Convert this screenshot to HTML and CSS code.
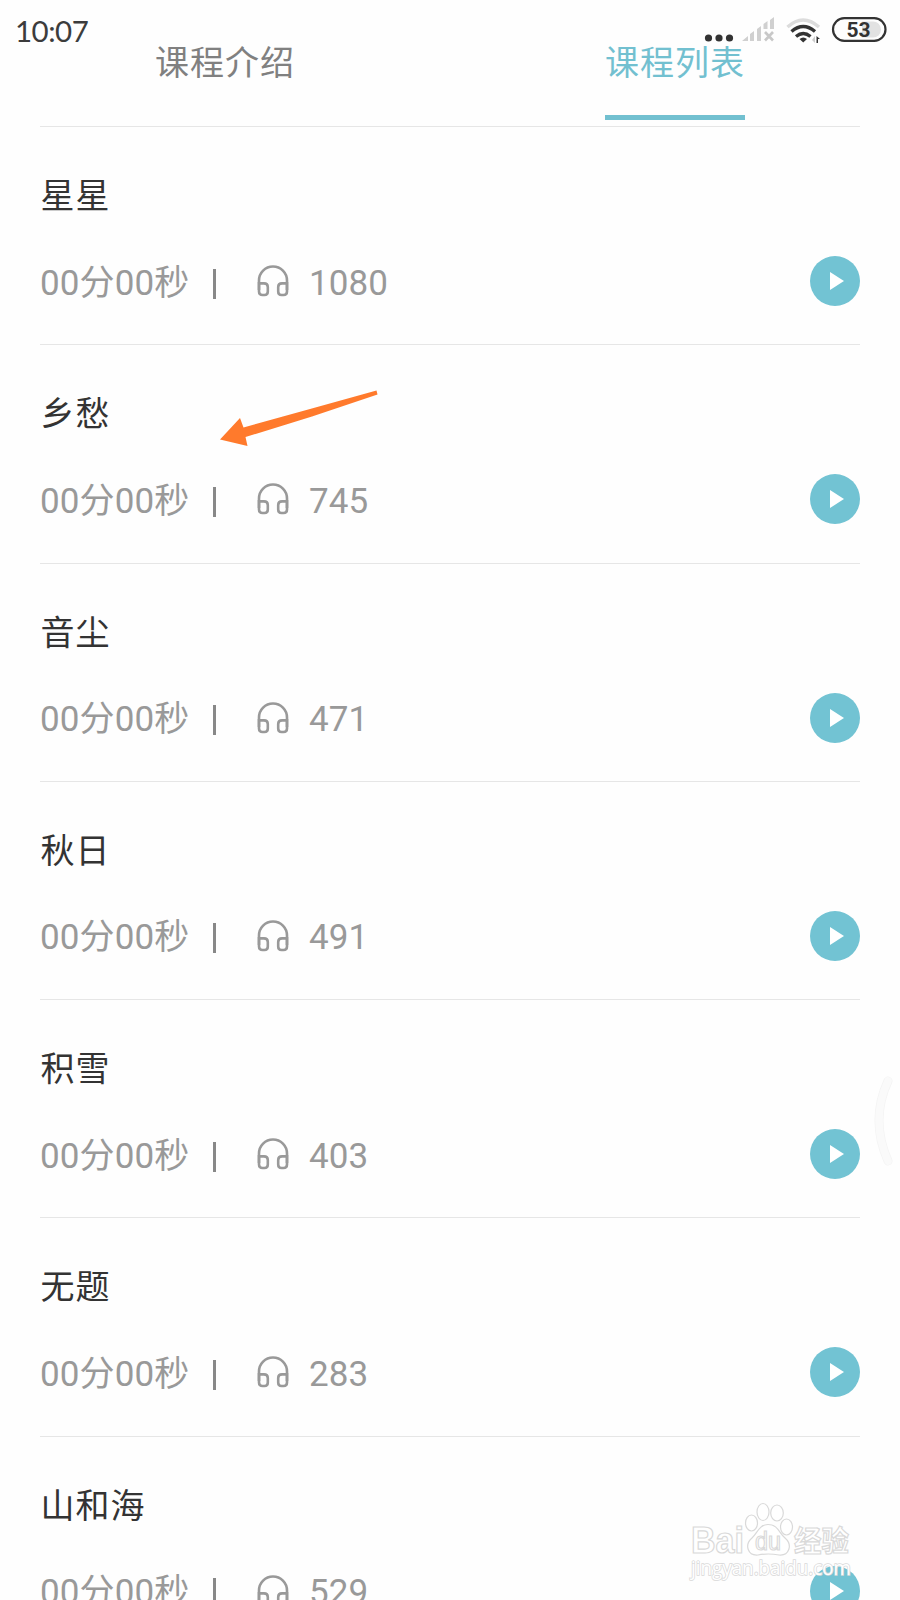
FILE: index.html
```
<!DOCTYPE html>
<html lang="zh-CN">
<head>
<meta charset="UTF-8">
<meta name="viewport" content="width=device-width, initial-scale=1.0">
<title>课程列表</title>
<link rel="stylesheet" href="styles.css">
</head>
<body>
<svg class="symbols" width="0" height="0">
    <symbol id="headphone" viewBox="0 0 32 32">
        <path d="M2 25V15.500a14 14 0 0 1 28 0V25" />
        <path d="M2 18.400H7Q10.800 18.400 10.800 22V26.500Q10.800 30 7.500 30H5.500Q2 30 2 26.500Z" />
        <path d="M30 18.400H25Q21.200 18.400 21.200 22V26.500Q21.200 30 24.500 30H26.500Q30 30 30 26.500Z" />
    </symbol>
</svg>

<div class="statusbar">
    <span class="clock">10:07</span>
    <svg class="status-icons" width="192" height="36" viewBox="700 12 192 36">
        <g fill="#333">
            <circle cx="708.5" cy="38" r="3.6" />
            <circle cx="719" cy="38" r="3.6" />
            <circle cx="729.5" cy="38" r="3.6" />
        </g>
        <g fill="#d0d0d0">
            <path d="M742 41l6-5v5zM750 34l4-3v10h-4zM757 29l4-3v15h-4zM763.500 24l4-3v8h-4zM770 20l4-3v12h-4z" />
            <path d="M765 32l8 8.500m0-8.500l-8 8.500" stroke="#c8c8c8" stroke-width="2.600" />
        </g>
        <g fill="none" stroke-width="3.400">
            <path d="M787.500 27Q803 13 819 27" stroke="#dcdcdc" />
            <path d="M791.500 31.500Q803.200 21.500 815 31.500M796 36.500Q803.200 30.500 810.500 36.500" stroke="#333" />
        </g>
        <path d="M799.500 39Q803.200 36 807 39L803.200 42.500z" fill="#333" />
        <path d="M815 36v7l-3-3z" fill="#ccc" />
        <path d="M816.500 36l3.500 3h-2v4h-1.500z" fill="#333" />
        <path d="M862 21.500h11a8 8 0 0 1 0 16h-11z" fill="#e2e2e2" />
        <rect x="833" y="18.200" width="52.500" height="22.600" rx="11.300" fill="none" stroke="#333" stroke-width="2.200" />
        <text class="battery" x="858.500" y="37" text-anchor="middle">53</text>
    </svg>
</div>

<div class="tabs">
    <div class="tab">课程介绍</div>
    <div class="tab active">课程列表</div>
</div>

<div class="list">
    <div class="item">
        <div class="title">星星</div>
        <div class="meta">
            <span class="time">00分00秒</span><span class="sep"></span>
            <svg class="headphone"><use href="#headphone" /></svg>
            <span class="count">1080</span>
            <span class="play"></span>
        </div>
    </div>
    <div class="item">
        <div class="title">乡愁</div>
        <div class="meta">
            <span class="time">00分00秒</span><span class="sep"></span>
            <svg class="headphone"><use href="#headphone" /></svg>
            <span class="count">745</span>
            <span class="play"></span>
        </div>
    </div>
    <div class="item">
        <div class="title">音尘</div>
        <div class="meta">
            <span class="time">00分00秒</span><span class="sep"></span>
            <svg class="headphone"><use href="#headphone" /></svg>
            <span class="count">471</span>
            <span class="play"></span>
        </div>
    </div>
    <div class="item">
        <div class="title">秋日</div>
        <div class="meta">
            <span class="time">00分00秒</span><span class="sep"></span>
            <svg class="headphone"><use href="#headphone" /></svg>
            <span class="count">491</span>
            <span class="play"></span>
        </div>
    </div>
    <div class="item">
        <div class="title">积雪</div>
        <div class="meta">
            <span class="time">00分00秒</span><span class="sep"></span>
            <svg class="headphone"><use href="#headphone" /></svg>
            <span class="count">403</span>
            <span class="play"></span>
        </div>
    </div>
    <div class="item">
        <div class="title">无题</div>
        <div class="meta">
            <span class="time">00分00秒</span><span class="sep"></span>
            <svg class="headphone"><use href="#headphone" /></svg>
            <span class="count">283</span>
            <span class="play"></span>
        </div>
    </div>
    <div class="item">
        <div class="title">山和海</div>
        <div class="meta">
            <span class="time">00分00秒</span><span class="sep"></span>
            <svg class="headphone"><use href="#headphone" /></svg>
            <span class="count">529</span>
            <span class="play"></span>
        </div>
    </div>
</div>

<svg class="arrow" width="160" height="58" viewBox="219 390 160 58">
    <path d="M220 439.500L240 418L243.500 427.500L310 409L376.500 390.500L377.500 394.500L312 416.500L245.500 437L247.500 446Z" fill="#ff7a2c" />
</svg>

<svg class="edge" width="24" height="94" viewBox="872 1074 24 94">
    <path d="M888 1081Q870 1120 888 1161" fill="none" stroke="#f4f4f4" stroke-width="9" stroke-linecap="round" />
    <path d="M888 1081Q870 1120 888 1161" fill="none" stroke="#fafafa" stroke-width="7.500" stroke-linecap="round" />
</svg>

<svg class="watermark" width="180" height="90" viewBox="684 1500 180 90">
    <g fill="#fff" stroke="#d9d9d9" stroke-width="1.200">
        <ellipse cx="751.500" cy="1523" rx="6" ry="8" />
        <ellipse cx="763" cy="1512" rx="6" ry="8.500" />
        <ellipse cx="777" cy="1513" rx="6.300" ry="8" />
        <ellipse cx="786.500" cy="1527" rx="6" ry="8" />
        <path d="M768 1524.500C759 1524.500 757 1534 752 1538C744 1545 748 1556 758 1555Q768 1553 779 1555C789 1556 793 1545 785 1538C779 1533 778 1524.500 768 1524.500Z" />
        <text class="wm-bai" x="691" y="1553" textLength="53" lengthAdjust="spacingAndGlyphs">Bai</text>
        <text class="wm-du" x="755" y="1550" textLength="26" lengthAdjust="spacingAndGlyphs">du</text>
        <text class="wm-cn" x="794" y="1552" textLength="55" lengthAdjust="spacingAndGlyphs">经验</text>
        <text class="wm-url" x="691" y="1575" textLength="160" lengthAdjust="spacingAndGlyphs">jingyan.baidu.com</text>
    </g>
</svg>
</body>
</html>
```
FILE: styles.css
```
* {
  box-sizing: border-box;
}
body {
  position: relative;
  margin: 0;
  width: 900px;
  height: 1600px;
  overflow: hidden;
  background: #fefefe;
  font-family: Roboto, "Noto Sans CJK SC", sans-serif;
}
.symbols {
  position: absolute;
}
.statusbar {
  display: flex;
  justify-content: space-between;
  height: 36px;
  padding: 12px 8px 0 15px;
}
.clock {
  font-family: Lato, sans-serif;
  font-size: 29.500px;
  line-height: 38px;
  letter-spacing: -0.500px;
  color: #3c3c3c;
}
.status-icons {
  position: relative;
  z-index: 1;
  flex: none;
}
.battery {
  font-family: Roboto, sans-serif;
  font-size: 21px;
  font-weight: 700;
  fill: #333;
}
.tabs {
  display: flex;
  justify-content: space-between;
  height: 91px;
  margin: 0 40px;
  padding: 0 115px 6px;
  border-bottom: 1px solid #e6e6e6;
}
.tab {
  width: 140px;
  padding-top: 2px;
  font-size: 34px;
  letter-spacing: 1px;
  line-height: 50px;
  color: #808080;
  white-space: nowrap;
}
.tab.active {
  border-bottom: 5px solid #72c0d0;
  color: #72c0d0;
}
.list {
  margin: 0 40px;
}
.item {
  height: 218.280px;
  padding-top: 44px;
  border-bottom: 1px solid #e6e6e6;
}
.title {
  height: 50px;
  padding-left: 0.500px;
  line-height: 50px;
  font-size: 34px;
  letter-spacing: 1px;
  color: #333;
}
.meta {
  display: flex;
  align-items: center;
  height: 50px;
  margin-top: 35px;
  font-size: 35px;
  line-height: 50px;
  color: #999;
}
.time {
  width: 173px;
  padding-top: 5px;
  letter-spacing: 0.100px;
  white-space: nowrap;
}
.sep {
  width: 3px;
  height: 30px;
  margin-top: 5px;
  background: #888;
}
.headphone {
  width: 32px;
  height: 32px;
  margin-left: 41px;
  fill: none;
  stroke: #999;
  stroke-width: 2.600;
}
.count {
  margin-left: 20px;
  padding-top: 5px;
  letter-spacing: 0.100px;
}
.play {
  display: flex;
  align-items: center;
  width: 50px;
  height: 50px;
  margin-left: auto;
  padding-left: 20px;
  border-radius: 50%;
  background: #72c3d3;
}
.play::before {
  content: "";
  border-left: 14px solid #fff;
  border-top: 9px solid transparent;
  border-bottom: 9px solid transparent;
}
.arrow {
  position: absolute;
  left: 219px;
  top: 390px;
}
.edge {
  position: absolute;
  left: 872px;
  top: 1074px;
}
.watermark {
  position: absolute;
  left: 684px;
  top: 1500px;
}
.wm-bai {
  font: 700 36px "Liberation Sans", sans-serif;
}
.wm-du {
  font: 400 25px "Liberation Sans", sans-serif;
}
.wm-cn {
  font: 700 29px "Noto Sans CJK SC", sans-serif;
}
.wm-url {
  font: 400 20px "Open Sans", sans-serif;
  fill: #fff;
  stroke: #d9d9d9;
  stroke-width: 1.600;
  paint-order: stroke;
}
```
